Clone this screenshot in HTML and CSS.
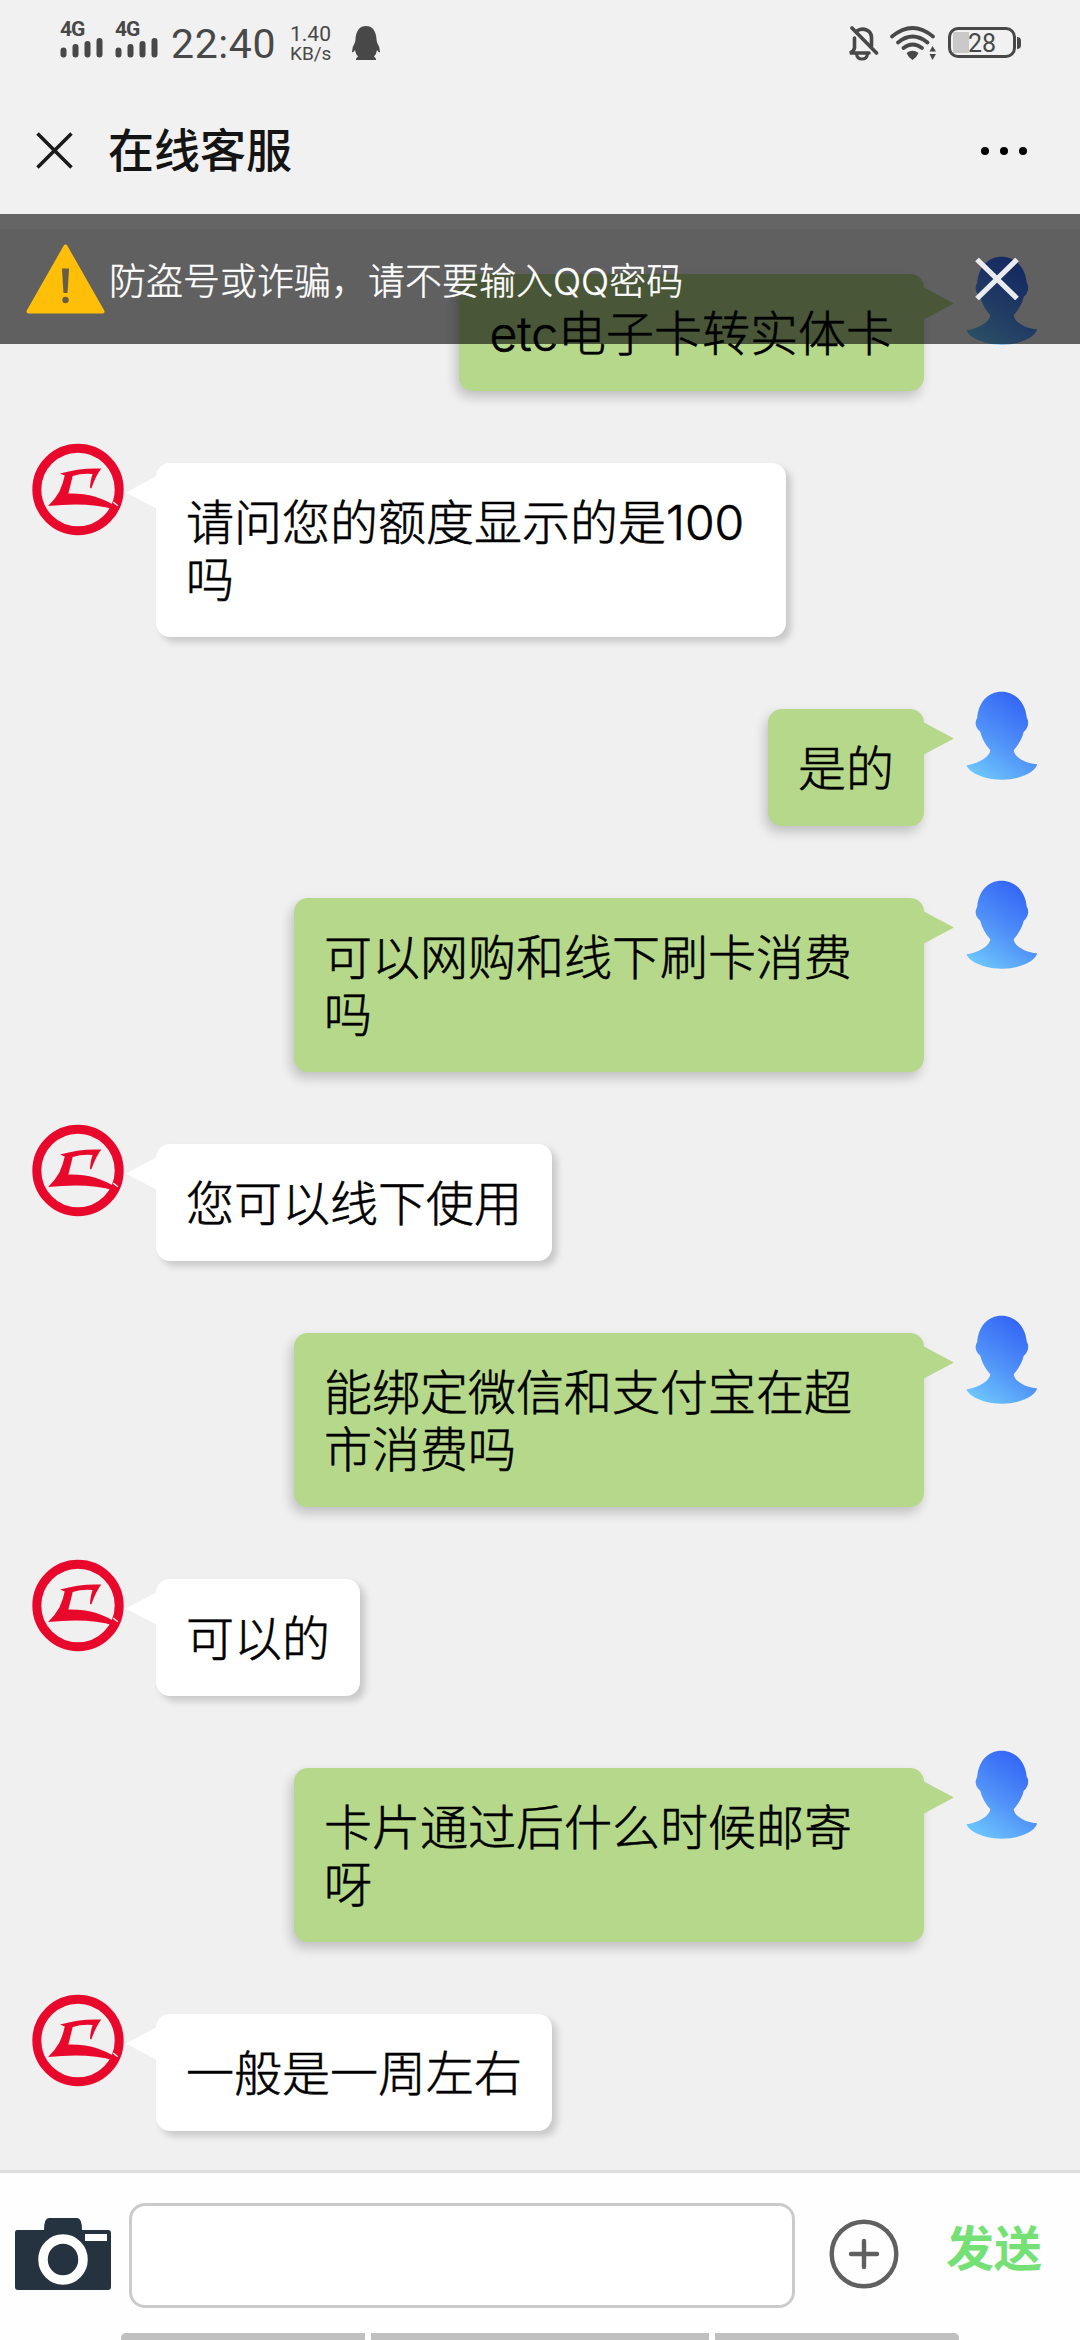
FILE: index.html
```html
<!DOCTYPE html>
<html lang="zh-CN">
<head>
<meta charset="utf-8">
<title>在线客服</title>
<link rel="stylesheet" href="styles.css">
</head>
<body>
<svg class="defs" width="0" height="0" aria-hidden="true">
  <defs>
    <linearGradient id="userFill" x1="0.75" y1="0.1" x2="0.25" y2="1">
      <stop offset="0" stop-color="#3568f6"/>
      <stop offset="0.5" stop-color="#4f90f8"/>
      <stop offset="1" stop-color="#6cc4fc"/>
    </linearGradient>
    <symbol id="agent" viewBox="96 70 276 280">
      <circle cx="234" cy="210" r="124" fill="none" stroke="#e8082c" stroke-width="27"/>
      <path d="M180 162Q240 144 304 147Q288 168 274 207L270 205Q272 178 278 163Q246 160 218 169Q212 194 205 222Q288 220 350 262L343 270Q262 246 144 260Q166 238 178 216Q190 190 194 168Z" fill="#e8082c"/>
      <path d="M340 248L354 259" stroke="#f0f0f0" stroke-width="4"/>
    </symbol>
    <symbol id="user" viewBox="680 62 214 266">
      <path d="M786 64C826 64 857 96 861 142C871 157 862 176 852 184C847 205 836 223 822 239C824 260 858 279 892 281C889 298 856 326 786 327C720 326 686 300 681 284C715 279 750 260 752 239C737 223 727 205 722 184C708 172 704 158 713 142C717 96 744 64 786 64Z" fill="url(#userFill)"/>
    </symbol>
    <symbol id="signal" viewBox="0 0 43 21">
      <path d="M3.500 13.500V17.500M15.500 10V17.500M27.500 7V17.500M39.500 4V17.500" stroke="#484848" stroke-width="6" stroke-linecap="round"/>
    </symbol>
  </defs>
</svg>
<div class="screen">
  <div class="status">
    <div class="cell"><span class="net">4G</span><svg class="bars"><use href="#signal"/></svg></div>
    <div class="cell"><span class="net">4G</span><svg class="bars"><use href="#signal"/></svg></div>
    <span class="clock">22:40</span>
    <div class="speed"><span>1.40</span><span>KB/s</span></div>
    <svg class="qq" viewBox="0 0 28 34"><path d="M14 0C20 0 24 4.500 24.500 13Q24.500 15 25.300 17Q28 21 28 26Q27 27 25 24Q24.500 28 22 30.500Q24.500 32 24 34H4Q3.500 32 6 30.500Q3.500 28 3 24Q1 27 0 26Q0 21 2.700 17Q3.500 15 3.500 13C4 4.500 8 0 14 0Z" fill="#484848"/></svg>
    <svg class="mute" viewBox="0 0 31 35"><g fill="none" stroke="#484848" stroke-width="3.600" stroke-linecap="round"><path d="M6.500 12V22Q6 25 2 27H21M9.500 4.500Q14 2 18.500 4Q23.500 6 23.500 12V20"/><path d="M8.500 28Q9 33 14 33T19.500 28" stroke-width="3"/><path d="M4 2L28.500 27"/></g></svg>
    <svg class="wifi" viewBox="0 0 46 35"><g fill="none" stroke="#484848" stroke-width="3.700" stroke-linecap="round"><path d="M2 10.500Q22.500 -6.500 43 10.500M8 16.500Q22.500 4.500 37.500 16.500M13.500 22Q22.500 15 32 22"/></g><path d="M16.500 27Q22.500 22.500 28.500 27Q27 31 22.500 34Q18 31 16.500 27Z M39.500 25.500L42.500 20L46 25.500ZM39.500 28L42.500 34L46 28Z" fill="#484848"/></svg>
    <div class="battery"><span>28</span></div>
  </div>
  <header class="header">
    <svg class="back" viewBox="0 0 37 37"><path d="M1.500 1.500L35.500 35.500M35.500 1.500L1.500 35.500" stroke="#1b1b1b" stroke-width="3.600"/></svg>
    <h1 class="title">在线客服</h1>
    <div class="more"><i></i><i></i><i></i></div>
  </header>
  <main class="chat">
    <div class="banner">
      <svg class="warn" viewBox="0 0 79 70"><path d="M39.500 2.500L76.500 67.500H2.500Z" fill="#ffbf08" stroke="#ffbf08" stroke-width="4" stroke-linejoin="round"/><path d="M36 24.500H43L41.500 49H37.500Z" fill="#665c48"/><circle cx="39.500" cy="56" r="3.200" fill="#665c48"/></svg>
      <span class="banner-text">防盗号或诈骗，请不要输入QQ密码</span>
      <svg class="dismiss" viewBox="0 0 44 42"><path d="M2 1.500L42 40.500M42 1.500L2 40.500" stroke="#e9ebef" stroke-width="5.200"/></svg>
    </div>
    <div class="messages">
      <div class="msg mine"><p class="bubble">etc电子卡转实体卡</p><svg class="avatar"><use href="#user"/></svg></div>
      <div class="msg theirs"><svg class="avatar"><use href="#agent"/></svg><p class="bubble">请问您的额度显示的是100吗</p></div>
      <div class="msg mine"><p class="bubble">是的</p><svg class="avatar"><use href="#user"/></svg></div>
      <div class="msg mine"><p class="bubble">可以网购和线下刷卡消费吗</p><svg class="avatar"><use href="#user"/></svg></div>
      <div class="msg theirs"><svg class="avatar"><use href="#agent"/></svg><p class="bubble">您可以线下使用</p></div>
      <div class="msg mine"><p class="bubble">能绑定微信和支付宝在超市消费吗</p><svg class="avatar"><use href="#user"/></svg></div>
      <div class="msg theirs"><svg class="avatar"><use href="#agent"/></svg><p class="bubble">可以的</p></div>
      <div class="msg mine"><p class="bubble">卡片通过后什么时候邮寄呀</p><svg class="avatar"><use href="#user"/></svg></div>
      <div class="msg theirs"><svg class="avatar"><use href="#agent"/></svg><p class="bubble">一般是一周左右</p></div>
    </div>
  </main>
  <footer class="footer">
    <div class="composer">
      <svg class="camera" viewBox="0 0 96 72"><path d="M2 12H29Q29 0 34 0H62Q67 0 67 12H93Q96 12 96 15V69Q96 72 93 72H3Q0 72 0 69V15Q0 12 2 12Z" fill="#24333f"/><ellipse cx="48" cy="41.500" rx="20" ry="20.500" fill="#24333f" stroke="#fff" stroke-width="9.500"/><path d="M70 16H92V23H70Z" fill="#fff"/></svg>
      <div class="field"></div>
      <svg class="plus" viewBox="0 0 70 70"><circle cx="35" cy="35" r="32.300" fill="none" stroke="#606060" stroke-width="4.400"/><path d="M22 35H48M35 22V48" stroke="#606060" stroke-width="4.400" stroke-linecap="round"/></svg>
      <span class="send">发送</span>
    </div>
    <div class="nav"><i></i><i></i><i></i></div>
  </footer>
</div>
</body>
</html>
```
FILE: styles.css
```css
* { box-sizing: border-box; }
body {
  margin: 0;
  background: #f1f1f1;
  font-family: Roboto, "Noto Sans CJK SC", sans-serif;
  color: #000;
}
.defs { display: block; height: 0; }
svg { display: block; flex: none; }
.screen {
  width: 1080px;
  height: 2340px;
  display: flex;
  flex-direction: column;
  overflow: hidden;
}
.status {
  height: 86px;
  padding: 22px 60px 0;
  display: flex;
  align-items: flex-start;
  color: #484848;
}
.cell { width: 55px; }
.net { display: block; height: 15px; font: 700 21px/15px Roboto, sans-serif; letter-spacing: -1px; }
.bars { width: 43px; height: 21px; }
.clock { width: 119px; margin-left: 1px; font-size: 41px; line-height: 44px; letter-spacing: 0.6px; }
.speed { width: 62px; display: flex; flex-direction: column; font-size: 19px; line-height: 19px; padding-top: 3px; white-space: nowrap; }
.speed span:first-child { font-size: 21px; }
.qq { width: 28px; height: 34px; margin-top: 4px; }
.mute { width: 31px; height: 35px; margin: 4px 11px 0 auto; }
.wifi { width: 46px; height: 35px; margin: 4px 12px 0 0; }
.battery {
  position: relative;
  width: 68px;
  height: 31px;
  margin: 5px 4px 0 0;
  border: 3px solid #484848;
  border-radius: 10px;
  background: linear-gradient(#c9c9c9, #c9c9c9) 2px 2px / 16px 21px no-repeat;
  font-size: 25px;
  line-height: 27px;
  text-align: center;
}
.battery::after {
  content: "";
  position: absolute;
  left: 66px;
  top: 7px;
  width: 4px;
  height: 12px;
  background: #484848;
  border-radius: 0 4px 4px 0;
}
.header {
  height: 128px;
  padding: 0 53px 0 36px;
  display: flex;
  align-items: center;
}
.back { width: 37px; height: 37px; }
.title { margin: 0 0 0 35px; padding-top: 2px; font-size: 46px; line-height: 60px; font-weight: 500; color: #141414; }
.more { margin-left: auto; display: flex; gap: 11px; padding-top: 2px; }
.more i { width: 8px; height: 8px; border-radius: 50%; background: #000; }
.chat {
  position: relative;
  height: 1956px;
  background: #f0f0f0;
  border-top: 15px solid #fdfdfd;
}
.banner {
  position: absolute;
  z-index: 2;
  left: 0;
  right: 0;
  top: -15px;
  height: 130px;
  padding: 0 61px 0 26px;
  display: flex;
  align-items: center;
  background: rgba(0, 0, 0, 0.6);
  color: #fff;
}
.warn { width: 79px; height: 70px; }
.banner-text {
  margin-left: 4px;
  padding-top: 5px;
  font-family: Inter, "Noto Sans CJK SC", sans-serif;
  font-weight: 300;
  -webkit-text-stroke: 0.4px currentColor;
  font-size: 37px;
  line-height: 50px;
  white-space: nowrap;
}
.dismiss { width: 44px; height: 42px; margin-left: auto; }
.messages { padding-top: 45px; display: flex; flex-direction: column; gap: 72px; }
.msg { display: flex; align-items: flex-start; }
.mine { justify-content: flex-end; padding-right: 42px; }
.theirs { padding-left: 32px; }
.bubble {
  position: relative;
  margin: 0;
  max-width: 630px;
  padding: 31px 30px 29px;
  border-radius: 14px;
  font-family: Inter, "Noto Sans CJK SC", sans-serif;
  font-weight: 300;
  -webkit-text-stroke: 0.6px currentColor;
  font-size: 48px;
  line-height: 57px;
}
.bubble::after { content: ""; position: absolute; top: 13px; width: 31px; height: 33px; }
.mine .bubble { background: #b6d88b; box-shadow: -3px 6px 12px rgba(0, 0, 0, 0.2); }
.theirs .bubble { background: #fff; box-shadow: 5px 5px 7px rgba(0, 0, 0, 0.17); }
.mine .bubble::after { left: calc(100% - 1px); background: #b6d88b; clip-path: polygon(0 0, 100% 50%, 0 100%); }
.theirs .bubble::after { right: calc(100% - 1px); background: #fff; clip-path: polygon(100% 0, 0 50%, 100% 100%); }
.mine .avatar { width: 72px; height: 89px; margin: -18px 0 0 42px; }
.theirs .avatar { width: 92px; height: 93px; margin: -20px 32px 0 0; }
.footer {
  height: 170px;
  border-top: 3px solid #dedede;
  background: #fefefe;
  display: flex;
  flex-direction: column;
}
.composer { height: 160px; padding: 30px 38px 0 15px; display: flex; align-items: flex-start; }
.camera { width: 96px; height: 72px; margin-top: 15px; }
.field { width: 666px; height: 105px; margin-left: 18px; border: 3px solid #cbcbcb; border-radius: 16px; background: #fff; }
.plus { width: 70px; height: 70px; margin: 16px 0 0 34px; }
.send { margin-left: auto; padding-top: 17px; font-size: 48px; line-height: 60px; font-weight: 700; color: #75e076; }
.nav { height: 7px; padding-left: 121px; display: grid; grid-template-columns: 244px 338px 244px; gap: 6px; }
.nav i { background: #c0c0c0; }
.nav i:first-child { border-top-left-radius: 5px; }
.nav i:last-child { border-top-right-radius: 5px; }
```
